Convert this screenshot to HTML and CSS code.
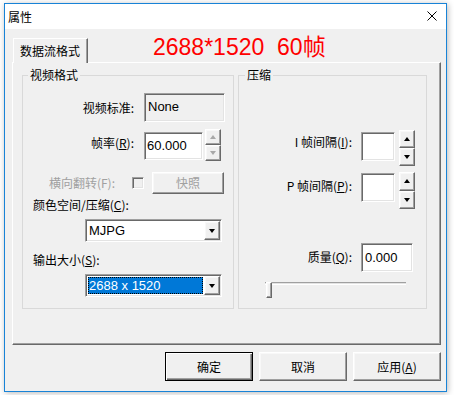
FILE: index.html
```html
<!DOCTYPE html>
<html>
<head>
<meta charset="utf-8">
<title>属性</title>
<link rel="stylesheet" href="styles.css">
</head>
<body>
<div class="window">
  <div class="titlebar">
    <span class="title">属性</span>
    <svg class="close" width="10" height="10" viewBox="0 0 10 10"><path d="M0.5 0.5L9.5 9.5M9.5 0.5L0.5 9.5" stroke="#000" stroke-width="1" fill="none"/></svg>
  </div>
  <div class="client">
    <div class="tabstrip">
      <div class="tab">数据流格式</div>
      <div class="banner">2688*1520  60帧</div>
    </div>
    <div class="panel">
      <fieldset class="group g1">
        <legend>视频格式</legend>
        <div class="row r1">
          <span class="lbl w111">视频标准:</span>
          <div class="static sunken">None</div>
        </div>
        <div class="row r2">
          <span class="lbl w111 lt7">帧率(<u>R</u>):</span>
          <div class="edit sunken e60">60.000</div>
          <div class="spin s1">
            <div class="sb raised"><i class="tri up dis"></i></div>
            <div class="sb raised"><i class="tri down dis"></i></div>
          </div>
        </div>
        <div class="row r3">
          <span class="lbl w92 disabled">横向翻转(F):</span>
          <div class="check sunken"></div>
          <div class="btn raised snap disabled">快照</div>
        </div>
        <div class="row r4"><span class="lbl">颜色空间/压缩(<u>C</u>):</span></div>
        <div class="row r5">
          <div class="combo sunken">
            <div class="val">MJPG</div>
            <div class="dd raised"><i class="tri down"></i></div>
          </div>
        </div>
        <div class="row r6"><span class="lbl">输出大小(<u>S</u>):</span></div>
        <div class="row r7">
          <div class="combo sunken">
            <div class="val sel"><span>2688 x 1520</span></div>
            <div class="dd raised"><i class="tri down"></i></div>
          </div>
        </div>
      </fieldset>
      <fieldset class="group g2">
        <legend>压缩</legend>
        <div class="row ri">
          <span class="lbl w113 lt5">I 帧间隔(<u>I</u>):</span>
          <div class="edit sunken e34 et2"></div>
          <div class="spin s2">
            <div class="sb raised"><i class="tri up"></i></div>
            <div class="sb raised"><i class="tri down"></i></div>
          </div>
        </div>
        <div class="row rp">
          <span class="lbl w113 lt7">P 帧间隔(<u>P</u>):</span>
          <div class="edit sunken e34 et1"></div>
          <div class="spin s3">
            <div class="sb raised"><i class="tri up"></i></div>
            <div class="sb raised"><i class="tri down"></i></div>
          </div>
        </div>
        <div class="row rq">
          <span class="lbl w113 lt7">质量(<u>Q</u>):</span>
          <div class="edit sunken e52">0.000</div>
        </div>
        <div class="slider">
          <div class="track"></div>
          <div class="thumb raised"></div>
        </div>
      </fieldset>
    </div>
    <div class="btnrow">
      <div class="btn raised big default">确定</div>
      <div class="btn raised big">取消</div>
      <div class="btn raised big">应用(<u>A</u>)</div>
    </div>
  </div>
</div>
</body>
</html>
```
FILE: styles.css
```css
* { box-sizing: border-box; }
html, body { margin: 0; }
body {
  width: 454px;
  height: 395px;
  overflow: hidden;
  background: #fff;
  padding: 3px 0 0 4px;
  font-family: "Noto Sans CJK SC", "Liberation Sans", sans-serif;
  font-size: 12px;
  line-height: 14px;
  color: #000;
}
u { text-decoration: underline; text-underline-offset: 1px; }

.window {
  width: 443px;
  height: 389px;
  border: 1px solid #1883d7;
  background: #f0f0f0;
  display: flex;
  flex-direction: column;
  box-shadow: 1px 1px 6px rgba(0,0,0,0.28);
}
.titlebar {
  height: 25px;
  background: #fff;
  display: flex;
  align-items: center;
  justify-content: space-between;
  padding: 0 9px 0 3px;
}
.title { font-size: 12px; }
.close { display: block; margin-top: -1px; }

.client { flex: 1; padding: 9px 0 0 7px; }

.tabstrip {
  display: flex;
  align-items: flex-start;
  height: 24px;
  position: relative;
  z-index: 1;
}
.tab {
  margin-left: 1px;
  width: 75px;
  height: 25px;
  background: #f0f0f0;
  border-top: 1px solid #fff;
  border-left: 1px solid #fff;
  border-right: 1px solid #696969;
  box-shadow: inset -1px 0 #a0a0a0;
  padding-left: 6px;
  line-height: 23px;
}
.banner {
  margin-left: 65px;
  margin-top: -3px;
  font-family: "Liberation Sans", "Noto Sans CJK SC", sans-serif;
  font-size: 23px;
  line-height: 24px;
  color: #ff0000;
  white-space: pre;
}

.panel {
  width: 429px;
  height: 283px;
  border-top: 1px solid #fff;
  border-left: 1px solid #fff;
  border-right: 1px solid #696969;
  border-bottom: 1px solid #696969;
  box-shadow: inset -1px -1px #a0a0a0;
  padding: 5px 0 0 9px;
  display: flex;
  align-items: flex-start;
  gap: 4px;
}

.group {
  margin: 0;
  padding: 0;
  min-width: 0;
  height: 241px;
  border: 1px solid #d9d9d9;
}
.g1 { width: 212px; }
.g2 { width: 189px; }
.group legend {
  padding: 0 2px;
  margin-left: 5px;
  line-height: 14px;
}
.g2 legend { margin-left: 6px; }

.row { display: flex; align-items: flex-start; }
.lbl { display: block; line-height: 14px; white-space: nowrap; }
.w111 { width: 111px; text-align: right; }
.w92 { width: 92px; text-align: right; }
.w113 { width: 113px; text-align: right; }
.lt5 { margin-top: 5px; }
.lt7 { margin-top: 7px; }
.disabled { color: #a0a0a0; }

.sunken {
  border: 1px solid;
  border-color: #a0a0a0 #fff #fff #a0a0a0;
  box-shadow: inset 1px 1px #696969, inset -1px -1px #e3e3e3;
  padding: 1px;
}
.raised {
  border: 1px solid;
  border-color: #fff #696969 #696969 #fff;
  box-shadow: inset -1px -1px #a0a0a0, inset 1px 1px #f8f8f8;
  background: #f0f0f0;
}

.num {
  font-family: "Liberation Sans", sans-serif;
}

/* group 1 */
.r1 { margin-top: 11px; height: 29px; align-items: center; }
.static {
  margin-left: 10px;
  width: 81px;
  height: 29px;
  background: #f0f0f0;
  font-family: "Liberation Sans", sans-serif;
  font-size: 13px;
  line-height: 16px;
  padding: 5px 2px 0 3px;
}
.r2 { margin-top: 7px; height: 32px; }
.edit {
  background: #fff;
  font-family: "Liberation Sans", sans-serif;
  font-size: 13px;
  line-height: 16px;
  display: flex;
  align-items: center;
  padding: 1px 1px 1px 2px;
}
.e60 { margin-left: 10px; margin-top: 3px; width: 59px; height: 28px; }
.spin { display: flex; flex-direction: column; width: 16px; }
.s1 { margin-left: 2px; height: 32px; }
.sb { flex: 1; display: flex; align-items: center; justify-content: center; }

.tri { display: block; width: 0; height: 0; border-left: 3.5px solid transparent; border-right: 3.5px solid transparent; }
.tri.up { border-bottom: 4px solid #000; }
.tri.down { border-top: 4px solid #000; }
.tri.up.dis { border-bottom-color: #a8a8a8; }
.tri.down.dis { border-top-color: #a8a8a8; }

.r3 { margin-top: 11px; height: 22px; align-items: center; }
.check { margin-left: 17px; width: 12px; height: 12px; background: #f0f0f0; }
.btn { display: flex; align-items: center; justify-content: center; }
.snap { margin-left: 8px; width: 72px; height: 22px; }

.r4 { margin-top: 4px; padding-left: 10px; }
.r5 { margin-top: 7px; }
.r6 { margin-top: 11px; padding-left: 10px; }
.r7 { margin-top: 7px; }
.combo {
  margin-left: 62px;
  width: 137px;
  height: 23px;
  background: #fff;
  display: flex;
}
.val {
  flex: 1;
  font-family: "Liberation Sans", sans-serif;
  font-size: 13px;
  line-height: 17px;
  padding: 1px 2px 0 2px;
}
.val.sel { padding: 1px; }
.val.sel span {
  display: block;
  height: 100%;
  background: #0078d7;
  color: #fff;
  outline: 1px dotted #000;
  outline-offset: -1px;
  padding: 1px 0 0 1px;
  line-height: 16px;
}
.dd { width: 16px; display: flex; align-items: center; justify-content: center; }

/* group 2 */
.ri { margin-top: 48px; height: 36px; }
.e34 { margin-left: 9px; width: 34px; height: 29px; }
.et2 { margin-top: 2px; }
.et1 { margin-top: 1px; }
.s2 { margin-left: 4px; height: 36px; }
.rp { margin-top: 6px; height: 37px; }
.s3 { margin-left: 4px; height: 37px; }
.rq { margin-top: 34px; height: 29px; }
.e52 { margin-left: 9px; width: 52px; height: 29px; padding-left: 3px; }

.slider {
  margin-top: 10px;
  margin-left: 26px;
  width: 141px;
  height: 16px;
  position: relative;
}
.track {
  margin-top: 6px;
  height: 3px;
  border-top: 1px solid #a0a0a0;
  border-bottom: 1px solid #fff;
  background: #e3e3e3;
}
.thumb {
  position: absolute;
  left: 1px;
  top: 0;
  width: 6px;
  height: 16px;
}

/* bottom buttons */
.btnrow {
  width: 429px;
  display: flex;
  justify-content: flex-end;
  gap: 6px;
  margin-top: 7px;
}
.big { width: 88px; height: 29px; }
.default {
  border-color: #000;
  box-shadow: inset 1px 1px #fff, inset -1px -1px #696969, inset -2px -2px #a0a0a0;
}
```
